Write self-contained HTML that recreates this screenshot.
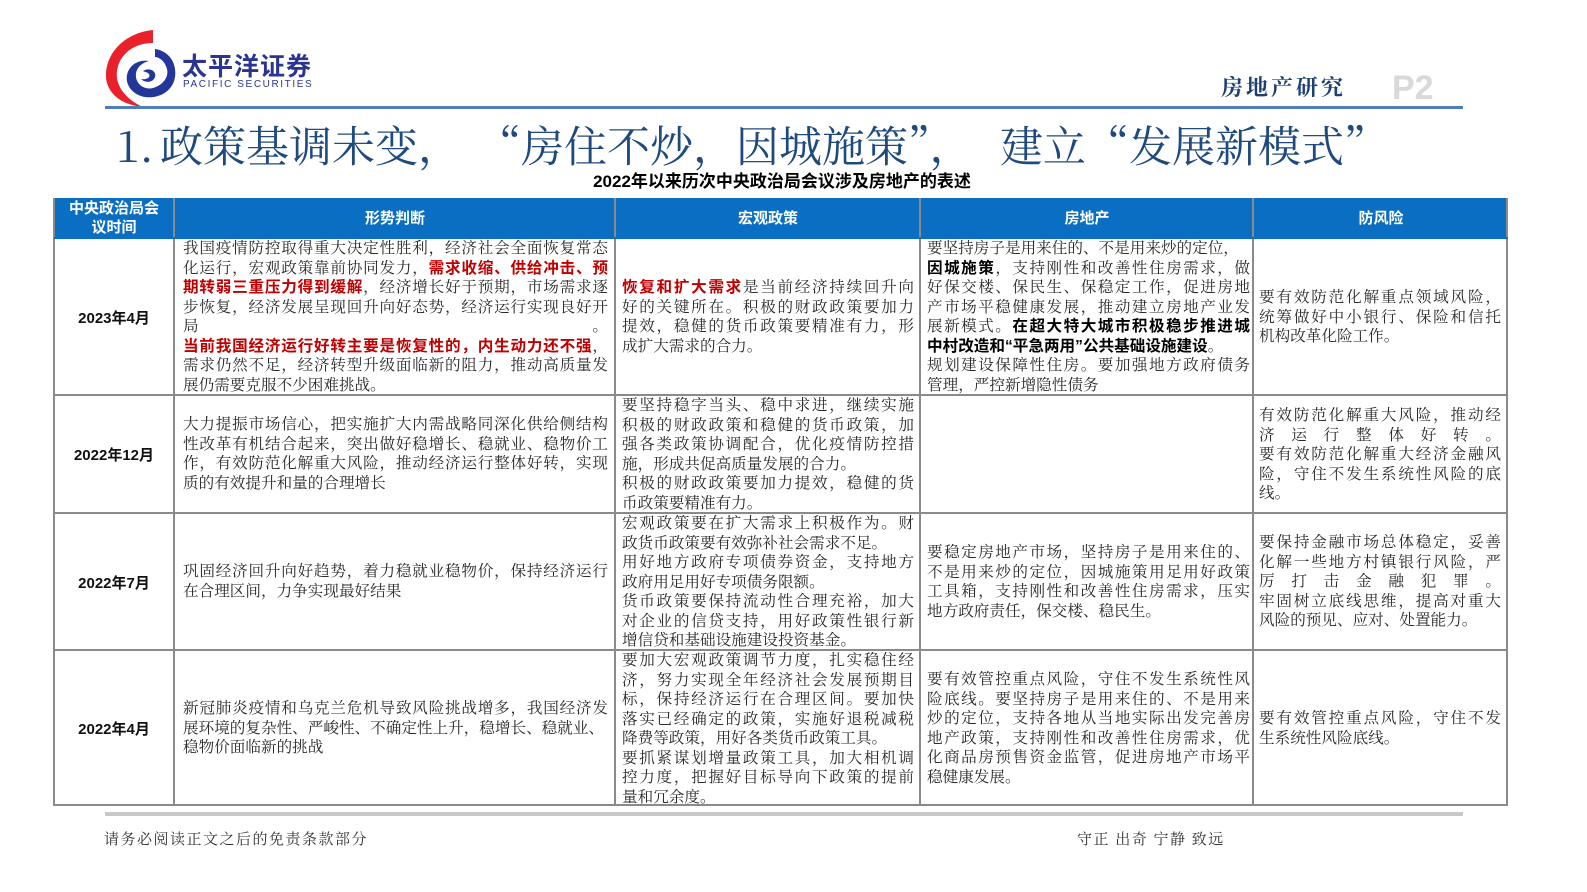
<!DOCTYPE html>
<html><head><meta charset="utf-8">
<style>
*{margin:0;padding:0;box-sizing:border-box}
body{width:1587px;height:892px;background:#fff;position:relative;overflow:hidden;font-family:"Liberation Serif","Noto Serif CJK SC",serif;color:#222}
.a{position:absolute}
.t{position:absolute;font-size:15.6px;line-height:19.5px;color:#2a2a2a}
.t div{text-align:justify;text-align-last:justify;white-space:nowrap}
.t div.e{text-align-last:left}
.r{color:#c00000;font-weight:bold;font-family:"Liberation Sans","Noto Sans CJK SC",sans-serif}
.b{color:#000;font-weight:bold;font-family:"Liberation Sans","Noto Sans CJK SC",sans-serif}
.hd{position:absolute;top:198px;height:40px;background:#0a6fc2;color:#fff;font-family:"Liberation Sans","Noto Sans CJK SC",sans-serif;font-weight:bold;font-size:15px;display:flex;align-items:center;justify-content:center;text-align:center;line-height:19px}
.vl{position:absolute;width:2px;background:#8a8a8a;top:198px;height:608px}
.hl{position:absolute;height:2px;background:#8a8a8a;left:54px;width:1454px}
.dt{position:absolute;left:54px;width:120px;text-align:center;font-family:"Liberation Sans","Noto Sans CJK SC",sans-serif;font-weight:bold;font-size:15px;color:#111}
.ti{position:absolute;top:117px;font-family:"Noto Serif CJK SC",serif;font-size:43px;line-height:56px;color:#1f4a7e;white-space:nowrap}
</style></head><body>
<svg class="a" style="left:103px;top:27px" width="80" height="82" viewBox="0 0 80 82">
<path d="M50 3 C20 6 2 28 3 50 C4 66 18 78 40 80 C22 72 12 58 14 44 C16 28 30 16 50 16 Z" fill="#e8212b"/>
<path d="M52 22 C66 24 74 36 72 50 C70 64 56 72 42 70 C30 68 22 58 24 48 C26 38 36 32 46 34 C38 36 32 42 33 50 C34 58 42 63 50 61 C60 58 66 50 64 42 C62 34 56 30 52 30 Z" fill="#23379a"/>
<path d="M40 44 C46 40 54 44 52 50 C50 56 42 56 38 52 C44 53 48 50 46 47 C44 45 42 45 40 44Z" fill="#23379a"/>
</svg>
<div class="a" style="left:182px;top:50px;font-family:'Noto Sans CJK SC',sans-serif;font-weight:bold;font-size:25px;line-height:30px;color:#2b3590;letter-spacing:1px">太平洋证券</div>
<div class="a" style="left:183px;top:79px;font-family:'Liberation Sans',sans-serif;font-size:10px;line-height:12px;color:#2b3590;letter-spacing:1.6px">PACIFIC SECURITIES</div>
<div class="a" style="left:1221px;top:72px;font-family:'Noto Serif CJK SC',serif;font-weight:bold;font-size:22px;line-height:30px;color:#1f3f74;letter-spacing:3px">房地产研究</div>
<div class="a" style="left:1392px;top:68px;font-family:'Liberation Sans',sans-serif;font-weight:bold;font-size:34px;color:#d9d9d9;line-height:40px">P2</div>
<div class="a" style="left:105px;top:106px;width:1358px;height:3px;background:#4f7fba"></div>
<div class="ti" style="left:116px">1.</div>
<div class="ti" style="left:160px">政策基调未变，</div>
<div class="ti" style="left:478px">“房住不炒，因城施策”，</div>
<div class="ti" style="left:1000px">建立“发展新模式”</div>
<div class="a" style="left:566px;top:171px;width:432px;text-align:center;font-family:'Liberation Sans','Noto Sans CJK SC',sans-serif;font-weight:bold;font-size:17px;color:#000;line-height:22px">2022年以来历次中央政治局会议涉及房地产的表述</div>

<div class="hd" style="left:54px;width:120px">中央政治局会<br>议时间</div>
<div class="hd" style="left:175px;width:440px">形势判断</div>
<div class="hd" style="left:616px;width:304px">宏观政策</div>
<div class="hd" style="left:921px;width:332px">房地产</div>
<div class="hd" style="left:1254px;width:254px">防风险</div>

<div class="vl" style="left:53px"></div><div class="vl" style="left:173px"></div><div class="vl" style="left:614px"></div><div class="vl" style="left:919px"></div><div class="vl" style="left:1252px"></div><div class="vl" style="left:1506px"></div>
<div class="hl" style="top:237px;background:#0a6fc2"></div>
<div class="hl" style="top:394px"></div><div class="hl" style="top:512px"></div><div class="hl" style="top:649px"></div><div class="hl" style="top:804px"></div>

<div class="dt" style="top:307px">2023年4月</div>
<div class="dt" style="top:444px">2022年12月</div>
<div class="dt" style="top:572px">2022年7月</div>
<div class="dt" style="top:718px">2022年4月</div>

<div class="t" style="left:183px;top:239px;width:425px">
<div>我国疫情防控取得重大决定性胜利，经济社会全面恢复常态</div>
<div>化运行，宏观政策靠前协同发力，<span class="r">需求收缩、供给冲击、预</span></div>
<div><span class="r">期转弱三重压力得到缓解</span>，经济增长好于预期，市场需求逐</div>
<div>步恢复，经济发展呈现回升向好态势，经济运行实现良好开</div>
<div>局　　　　　　　　　　　　　　　　　　　　　　　　。</div>
<div><span class="r">当前我国经济运行好转主要是恢复性的，内生动力还不强</span>，</div>
<div>需求仍然不足，经济转型升级面临新的阻力，推动高质量发</div>
<div class="e">展仍需要克服不少困难挑战。</div>
</div>
<div class="t" style="left:622px;top:278px;width:292px">
<div><span class="r">恢复和扩大需求</span>是当前经济持续回升向</div>
<div>好的关键所在。积极的财政政策要加力</div>
<div>提效，稳健的货币政策要精准有力，形</div>
<div class="e">成扩大需求的合力。</div>
</div>
<div class="t" style="left:927px;top:239px;width:323px">
<div class="e">要坚持房子是用来住的、不是用来炒的定位，</div>
<div><span class="b">因城施策</span>，支持刚性和改善性住房需求，做</div>
<div>好保交楼、保民生、保稳定工作，促进房地</div>
<div>产市场平稳健康发展，推动建立房地产业发</div>
<div>展新模式。<span class="b">在超大特大城市积极稳步推进城</span></div>
<div class="e"><span class="b">中村改造和“平急两用”公共基础设施建设</span>。</div>
<div>规划建设保障性住房。要加强地方政府债务</div>
<div class="e">管理，严控新增隐性债务</div>
</div>
<div class="t" style="left:1259px;top:288px;width:242px">
<div>要有效防范化解重点领域风险，</div>
<div>统筹做好中小银行、保险和信托</div>
<div class="e">机构改革化险工作。</div>
</div>
<div class="t" style="left:183px;top:415px;width:425px">
<div>大力提振市场信心，把实施扩大内需战略同深化供给侧结构</div>
<div>性改革有机结合起来，突出做好稳增长、稳就业、稳物价工</div>
<div>作，有效防范化解重大风险，推动经济运行整体好转，实现</div>
<div class="e">质的有效提升和量的合理增长</div>
</div>
<div class="t" style="left:622px;top:396px;width:292px">
<div>要坚持稳字当头、稳中求进，继续实施</div>
<div>积极的财政政策和稳健的货币政策，加</div>
<div>强各类政策协调配合，优化疫情防控措</div>
<div class="e">施，形成共促高质量发展的合力。</div>
<div>积极的财政政策要加力提效，稳健的货</div>
<div class="e">币政策要精准有力。</div>
</div>
<div class="t" style="left:1259px;top:406px;width:242px">
<div>有效防范化解重大风险，推动经</div>
<div>济运行整体好转。</div>
<div>要有效防范化解重大经济金融风</div>
<div>险，守住不发生系统性风险的底</div>
<div class="e">线。</div>
</div>
<div class="t" style="left:183px;top:562px;width:425px">
<div>巩固经济回升向好趋势，着力稳就业稳物价，保持经济运行</div>
<div class="e">在合理区间，力争实现最好结果</div>
</div>
<div class="t" style="left:622px;top:514px;width:292px">
<div>宏观政策要在扩大需求上积极作为。财</div>
<div class="e">政货币政策要有效弥补社会需求不足。</div>
<div>用好地方政府专项债券资金，支持地方</div>
<div class="e">政府用足用好专项债务限额。</div>
<div>货币政策要保持流动性合理充裕，加大</div>
<div>对企业的信贷支持，用好政策性银行新</div>
<div class="e">增信贷和基础设施建设投资基金。</div>
</div>
<div class="t" style="left:927px;top:543px;width:323px">
<div>要稳定房地产市场，坚持房子是用来住的、</div>
<div>不是用来炒的定位，因城施策用足用好政策</div>
<div>工具箱，支持刚性和改善性住房需求，压实</div>
<div class="e">地方政府责任，保交楼、稳民生。</div>
</div>
<div class="t" style="left:1259px;top:533px;width:242px">
<div>要保持金融市场总体稳定，妥善</div>
<div>化解一些地方村镇银行风险，严</div>
<div>厉打击金融犯罪。</div>
<div>牢固树立底线思维，提高对重大</div>
<div class="e">风险的预见、应对、处置能力。</div>
</div>
<div class="t" style="left:183px;top:699px;width:425px">
<div>新冠肺炎疫情和乌克兰危机导致风险挑战增多，我国经济发</div>
<div class="e">展环境的复杂性、严峻性、不确定性上升，稳增长、稳就业、</div>
<div class="e">稳物价面临新的挑战</div>
</div>
<div class="t" style="left:622px;top:651px;width:292px">
<div>要加大宏观政策调节力度，扎实稳住经</div>
<div>济，努力实现全年经济社会发展预期目</div>
<div>标，保持经济运行在合理区间。要加快</div>
<div>落实已经确定的政策，实施好退税减税</div>
<div class="e">降费等政策，用好各类货币政策工具。</div>
<div>要抓紧谋划增量政策工具，加大相机调</div>
<div>控力度，把握好目标导向下政策的提前</div>
<div class="e">量和冗余度。</div>
</div>
<div class="t" style="left:927px;top:670px;width:323px">
<div>要有效管控重点风险，守住不发生系统性风</div>
<div>险底线。要坚持房子是用来住的、不是用来</div>
<div>炒的定位，支持各地从当地实际出发完善房</div>
<div>地产政策，支持刚性和改善性住房需求，优</div>
<div>化商品房预售资金监管，促进房地产市场平</div>
<div class="e">稳健康发展。</div>
</div>
<div class="t" style="left:1259px;top:709px;width:242px">
<div>要有效管控重点风险，守住不发</div>
<div class="e">生系统性风险底线。</div>
</div>

<div class="a" style="left:105px;top:812px;width:1358px;height:4px;background:#c8c8c8"></div>
<div class="a" style="left:104px;top:828px;font-size:15px;color:#333;letter-spacing:1.5px">请务必阅读正文之后的免责条款部分</div>
<div class="a" style="left:1077px;top:828px;font-size:15px;color:#333;letter-spacing:1.5px">守正 出奇 宁静 致远</div>
</body></html>
